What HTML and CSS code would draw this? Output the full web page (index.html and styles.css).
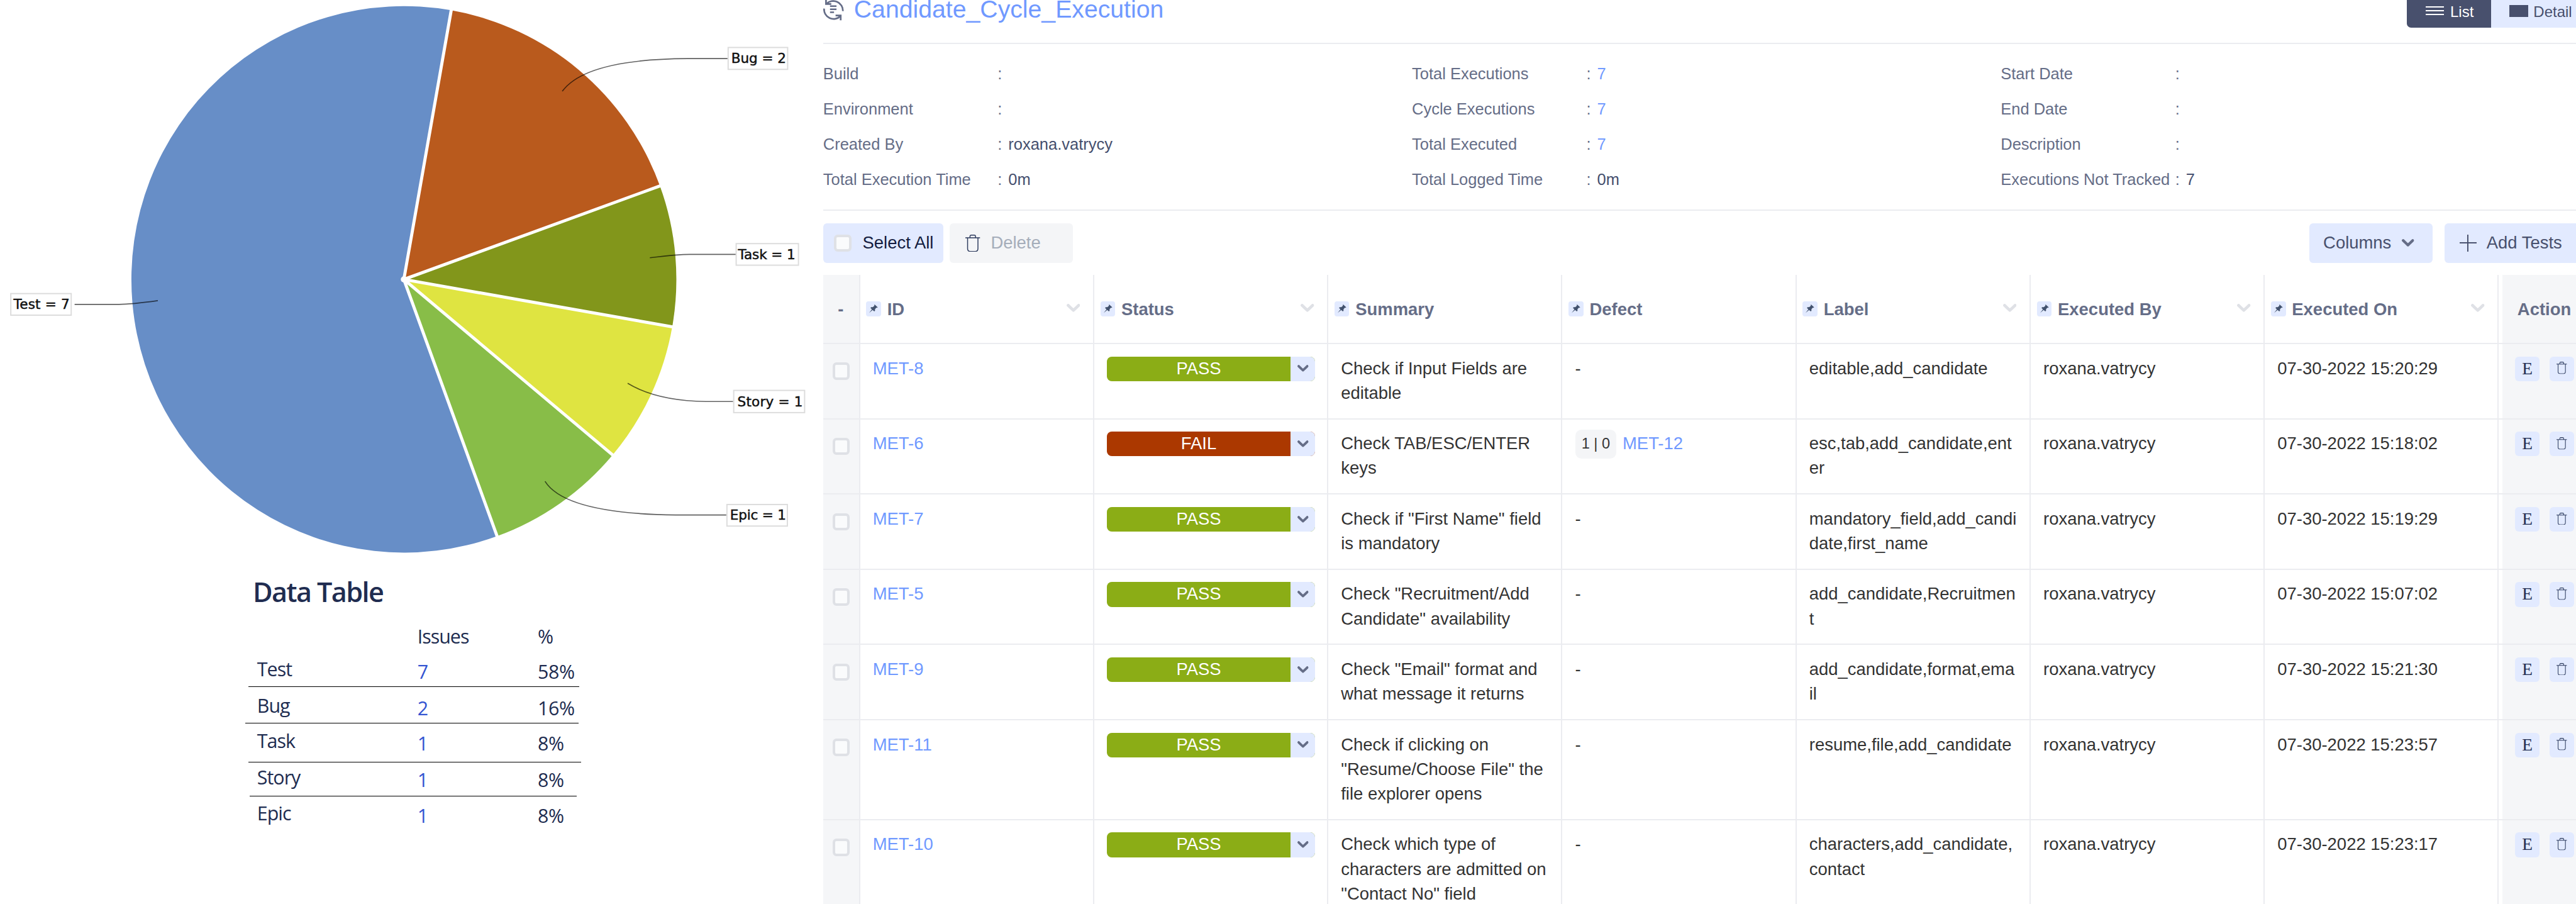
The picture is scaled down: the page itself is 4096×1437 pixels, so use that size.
FILE: index.html
```html
<!DOCTYPE html>
<html lang="en">
<head>
<meta charset="utf-8">
<title>Candidate_Cycle_Execution</title>
<link rel="stylesheet" href="styles.css">
</head>
<body>
<svg class="sprite" width="0" height="0" aria-hidden="true">
  <symbol id="pin" viewBox="0 0 24 24"><path d="M14 5L19 9.6L17.9 10.4L16.9 10.2L14.6 12.7L14.6 15.2L13.4 16.4L10.7 14L5 19L9.6 12.9L7.2 10.7L8.4 9.5L11 9.5L13.7 7.2L13.3 6.1Z" fill="#42526e"/></symbol>
  <symbol id="chev" viewBox="0 0 22 14"><path d="M2.5 2.5Q8 8 11 10.5Q14 8 19.5 2.5" fill="none" stroke="currentColor" stroke-width="4.8" stroke-linecap="round" stroke-linejoin="round"/></symbol>
  <symbol id="trash" viewBox="0 0 24 28"><path d="M0 5.2H24M7.5 5V3Q7.500 .8 9.700 .8H14.300Q16.500 .8 16.500 3V5M3.600 5.500V22.500Q3.600 27.200 8 27.200H16Q20.400 27.200 20.400 22.500V5.500" fill="none" stroke="#2c3a5c" stroke-width="1.500"/></symbol>
</svg>
<main class="page">
  <section class="report">
    <svg class="pie" viewBox="0 0 1335 925">
      <path fill="#678ec7" d="M655 453L731.800 16.700A442 443 0 1 0 806.200 869.300Z"/>
      <path fill="#b95a1d" d="M655 453L731.800 16.700A442 443 0 0 1 1070.300 301.500Z"/>
      <path fill="#82961b" d="M655 453L1070.300 301.500A442 443 0 0 1 1090.300 529.900Z"/>
      <path fill="#dfe441" d="M655 453L1090.300 529.900A442 443 0 0 1 993.600 737.800Z"/>
      <path fill="#88bd48" d="M655 453L993.600 737.800A442 443 0 0 1 806.200 869.300Z"/>
      <path stroke="#fff" stroke-width="5" d="M655 453L732.700 11.700M655 453L1075 299.800M655 453L1095.300 530.800M655 453L997.500 741M655 453L807.900 874"/>
      <circle cx="655" cy="453" r="5" fill="#fff"/>
      <g fill="none" stroke="#000" stroke-opacity=".62" stroke-width="1.700">
        <path d="M912 148Q950 96 1115 95H1180"/>
        <path d="M1054 418Q1100 412.500 1119 412.500H1194"/>
        <path d="M1018 621.500Q1065 650 1145 651H1189"/>
        <path d="M884 780.500Q917 833 1096 835H1178"/>
        <path d="M256 487.500Q213 493.500 193 493.500H121"/>
      </g>
      <g fill="#fff" stroke="#dcdcdc" stroke-width="2">
        <rect x="1181" y="77" width="96.500" height="35.500"/>
        <rect x="1194" y="395" width="101" height="35"/>
        <rect x="1190" y="633" width="115" height="36"/>
        <rect x="1179" y="818" width="98" height="35"/>
        <rect x="17.500" y="476" width="98" height="35"/>
      </g>
      <g class="pie-text">
        <text x="1186" y="102.500" textLength="89">Bug = 2</text>
        <text x="1197" y="420" textLength="93">Task = 1</text>
        <text x="1196" y="659" textLength="106">Story = 1</text>
        <text x="1184" y="843" textLength="91">Epic = 1</text>
        <text x="22" y="501" textLength="91">Test = 7</text>
      </g>
    </svg>
    <h2 class="data-title">Data Table</h2>
    <div class="data-row data-head"><span></span><span>Issues</span><span>%</span></div>
    <div class="data-row row-test"><span>Test</span><a>7</a><b>58%</b></div>
    <div class="rule rule-test"></div>
    <div class="data-row row-bug"><span>Bug</span><a>2</a><b>16%</b></div>
    <div class="rule rule-bug"></div>
    <div class="data-row row-task"><span>Task</span><a>1</a><b>8%</b></div>
    <div class="rule rule-task"></div>
    <div class="data-row row-story"><span>Story</span><a>1</a><b>8%</b></div>
    <div class="rule rule-story"></div>
    <div class="data-row row-epic"><span>Epic</span><a>1</a><b>8%</b></div>
  </section>

  <section class="cycle">
    <header class="title-bar">
      <svg class="cycle-icon" viewBox="0 0 34 36"><g fill="none" stroke="#656d87" stroke-width="2.800"><path d="M5.500 8A15.500 15.500 0 0 1 31.800 20"/><path d="M4.500 .5V8.500H13"/><path d="M1.400 16A15.500 15.500 0 0 0 28 28"/><path d="M20 27.200H28.300V35"/></g><path d="M11 12H21.500M11 17H21.500M11 22H17.500" stroke="#656d87" stroke-width="2.600"/></svg>
      <h1>Candidate_Cycle_Execution</h1>
      <div class="toggle">
        <span class="toggle-item toggle-on"><i class="lines"><i></i><i></i><i></i></i>List</span>
        <span class="toggle-item"><i class="block"></i>Detail</span>
      </div>
    </header>

    <dl class="info">
      <div><dt>Build</dt><dd>:</dd></div>
      <div><dt>Total Executions</dt><dd>: <a>7</a></dd></div>
      <div><dt>Start Date</dt><dd>:</dd></div>
      <div><dt>Environment</dt><dd>:</dd></div>
      <div><dt>Cycle Executions</dt><dd>: <a>7</a></dd></div>
      <div><dt>End Date</dt><dd>:</dd></div>
      <div><dt>Created By</dt><dd>: <b>roxana.vatrycy</b></dd></div>
      <div><dt>Total Executed</dt><dd>: <a>7</a></dd></div>
      <div><dt>Description</dt><dd>:</dd></div>
      <div><dt>Total Execution Time</dt><dd>: <b>0m</b></dd></div>
      <div><dt>Total Logged Time</dt><dd>: <b>0m</b></dd></div>
      <div><dt>Executions Not Tracked</dt><dd>: <b>7</b></dd></div>
    </dl>

    <div class="tools">
      <span class="btn btn-select"><i class="check"></i>Select All</span>
      <span class="btn btn-delete"><svg width="24" height="28"><use href="#trash"/></svg>Delete</span>
      <span class="btn btn-columns">Columns<svg width="20" height="13"><use href="#chev"/></svg></span>
      <span class="btn btn-add"><i class="plus"></i>Add Tests</span>
    </div>

    <div class="grid">
      <div class="tr th">
        <div class="pick">-</div>
        <div class="td"><svg class="pin"><use href="#pin"/></svg>ID<svg class="sort"><use href="#chev"/></svg></div>
        <div class="td"><svg class="pin"><use href="#pin"/></svg>Status<svg class="sort"><use href="#chev"/></svg></div>
        <div class="td"><svg class="pin"><use href="#pin"/></svg>Summary</div>
        <div class="td"><svg class="pin"><use href="#pin"/></svg>Defect</div>
        <div class="td"><svg class="pin"><use href="#pin"/></svg>Label<svg class="sort"><use href="#chev"/></svg></div>
        <div class="td"><svg class="pin"><use href="#pin"/></svg>Executed By<svg class="sort"><use href="#chev"/></svg></div>
        <div class="td"><svg class="pin"><use href="#pin"/></svg>Executed On<svg class="sort"><use href="#chev"/></svg></div>
        <div class="act">Action</div>
      </div>
      <div class="tr">
        <div class="pick"><i class="check"></i></div>
        <div class="td"><a>MET-8</a></div>
        <div class="td"><span class="status"><b>PASS</b><i><svg><use href="#chev"/></svg></i></span></div>
        <div class="td">Check if Input Fields are<br>editable</div>
        <div class="td">-</div>
        <div class="td">editable,add_candidate</div>
        <div class="td">roxana.vatrycy</div>
        <div class="td">07-30-2022 15:20:29</div>
        <div class="act"><span class="mini">E</span><span class="mini"><svg><use href="#trash"/></svg></span></div>
      </div>
      <div class="tr">
        <div class="pick"><i class="check"></i></div>
        <div class="td"><a>MET-6</a></div>
        <div class="td"><span class="status fail"><b>FAIL</b><i><svg><use href="#chev"/></svg></i></span></div>
        <div class="td">Check TAB/ESC/ENTER<br>keys</div>
        <div class="td defect"><span class="badge">1 | 0</span><a>MET-12</a></div>
        <div class="td">esc,tab,add_candidate,ent<br>er</div>
        <div class="td">roxana.vatrycy</div>
        <div class="td">07-30-2022 15:18:02</div>
        <div class="act"><span class="mini">E</span><span class="mini"><svg><use href="#trash"/></svg></span></div>
      </div>
      <div class="tr">
        <div class="pick"><i class="check"></i></div>
        <div class="td"><a>MET-7</a></div>
        <div class="td"><span class="status"><b>PASS</b><i><svg><use href="#chev"/></svg></i></span></div>
        <div class="td">Check if "First Name" field<br>is mandatory</div>
        <div class="td">-</div>
        <div class="td">mandatory_field,add_candi<br>date,first_name</div>
        <div class="td">roxana.vatrycy</div>
        <div class="td">07-30-2022 15:19:29</div>
        <div class="act"><span class="mini">E</span><span class="mini"><svg><use href="#trash"/></svg></span></div>
      </div>
      <div class="tr">
        <div class="pick"><i class="check"></i></div>
        <div class="td"><a>MET-5</a></div>
        <div class="td"><span class="status"><b>PASS</b><i><svg><use href="#chev"/></svg></i></span></div>
        <div class="td">Check "Recruitment/Add<br>Candidate" availability</div>
        <div class="td">-</div>
        <div class="td">add_candidate,Recruitmen<br>t</div>
        <div class="td">roxana.vatrycy</div>
        <div class="td">07-30-2022 15:07:02</div>
        <div class="act"><span class="mini">E</span><span class="mini"><svg><use href="#trash"/></svg></span></div>
      </div>
      <div class="tr">
        <div class="pick"><i class="check"></i></div>
        <div class="td"><a>MET-9</a></div>
        <div class="td"><span class="status"><b>PASS</b><i><svg><use href="#chev"/></svg></i></span></div>
        <div class="td">Check "Email" format and<br>what message it returns</div>
        <div class="td">-</div>
        <div class="td">add_candidate,format,ema<br>il</div>
        <div class="td">roxana.vatrycy</div>
        <div class="td">07-30-2022 15:21:30</div>
        <div class="act"><span class="mini">E</span><span class="mini"><svg><use href="#trash"/></svg></span></div>
      </div>
      <div class="tr tall">
        <div class="pick"><i class="check"></i></div>
        <div class="td"><a>MET-11</a></div>
        <div class="td"><span class="status"><b>PASS</b><i><svg><use href="#chev"/></svg></i></span></div>
        <div class="td">Check if clicking on<br>"Resume/Choose File" the<br>file explorer opens</div>
        <div class="td">-</div>
        <div class="td">resume,file,add_candidate</div>
        <div class="td">roxana.vatrycy</div>
        <div class="td">07-30-2022 15:23:57</div>
        <div class="act"><span class="mini">E</span><span class="mini"><svg><use href="#trash"/></svg></span></div>
      </div>
      <div class="tr tall">
        <div class="pick"><i class="check"></i></div>
        <div class="td"><a>MET-10</a></div>
        <div class="td"><span class="status"><b>PASS</b><i><svg><use href="#chev"/></svg></i></span></div>
        <div class="td">Check which type of<br>characters are admitted on<br>"Contact No" field</div>
        <div class="td">-</div>
        <div class="td">characters,add_candidate,<br>contact</div>
        <div class="td">roxana.vatrycy</div>
        <div class="td">07-30-2022 15:23:17</div>
        <div class="act"><span class="mini">E</span><span class="mini"><svg><use href="#trash"/></svg></span></div>
      </div>
    </div>
  </section>
</main>
</body>
</html>
```
FILE: styles.css
```css
* { box-sizing: border-box; }
html, body { margin: 0; height: 1437px; overflow: hidden; background: #fff; }
h1, h2, dl, dd { margin: 0; }
i { font-style: normal; }
.sprite { position: absolute; }

.page {
  --line: 2.05px;
  zoom: 0.980374;
  width: 4178px;
  height: 1466px;
  display: flex;
  overflow: hidden;
  font-family: "Liberation Sans", Arial, sans-serif;
  font-size: 28px;
  color: #333;
}

/* pie report */
.report {
  width: 1335px;
  flex: none;
  font-family: "Open Sans", "Noto Sans", sans-serif;
  color: #202c50;
}
.pie { display: block; width: 1335px; height: 925px; }
.pie-text { font-family: "DejaVu Sans", sans-serif; font-size: 22px; fill: #111; stroke: #111; stroke-width: 0.5px; }
.data-title {
  margin-left: 410px;
  height: 85px;
  line-height: 60px;
  padding-top: 5px;
  font-size: 44px;
  font-weight: 600;
  letter-spacing: -1.6px;
}
.data-row {
  display: grid;
  grid-template-columns: 260px 195px 100px;
  margin-left: 417px;
  font-size: 31px;
  line-height: 44px;
  letter-spacing: -1px;
}
.data-row a { color: #3454d1; padding-top: 4px; }
.data-row b { font-weight: 400; padding-top: 4px; letter-spacing: -0.3px; }
.data-head { height: 52px; }
.row-test { height: 51px; padding-top: 1px; }
.row-bug { height: 58px; padding-top: 8px; }
.row-task { height: 62px; padding-top: 6px; }
.row-story { height: 54px; padding-top: 2px; }
.row-epic { height: 60px; padding-top: 5px; }
.rule { border-top: 1.05px solid #000; }
.rule-test { margin-left: 403px; width: 536px; }
.rule-bug { margin-left: 398px; width: 540px; }
.rule-task { margin-left: 403px; width: 540px; }
.rule-story { margin-left: 405px; width: 530px; }

/* cycle panel */
.cycle { flex: 1; min-width: 0; }
.cycle a { color: #7099ff; }
.title-bar {
  display: flex;
  height: 71px;
  border-bottom: var(--line) solid #ebecf0;
}
.cycle-icon { width: 34px; height: 36px; margin-top: -2px; }
.title-bar h1 {
  flex: 1;
  margin: -8px 0 0 16px;
  line-height: 46px;
  font-size: 40px;
  font-weight: 400;
  color: #7099ff;
}
.toggle { display: flex; height: 45px; width: 274px; font-size: 24.5px; line-height: 38px; }
.toggle-item {
  display: flex;
  flex: none;
  width: 136px;
  padding-left: 30px;
  background: #e2eaff;
  color: #48506d;
}
.toggle-item + .toggle-item { width: 138px; }
.toggle-on { background: #48506d; color: #fff; border-bottom-left-radius: 7px; }
.lines { width: 30px; margin: 10px 10px 0 0; display: grid; gap: 4px; align-content: start; }
.lines i { height: 2.05px; background: #fff; }
.block { width: 30px; height: 20px; margin: 8px 9px 0 0; background: #48506d; }

.info {
  display: grid;
  grid-template-columns: 955px 955px 900px;
  grid-auto-rows: 57px;
  height: 271px;
  padding-top: 21px;
  border-bottom: var(--line) solid #ebecf0;
  font-size: 26px;
  line-height: 57px;
  color: #656d87;
}
.info div { display: flex; }
.info dt { width: 283px; white-space: nowrap; }
.info dd { white-space: pre; }
.info dd b { font-weight: 400; color: #454f6e; }
.info dd a, .info dd b { margin-left: 3px; }

.tools { display: flex; height: 104px; padding-top: 20px; }
.btn {
  display: flex;
  align-items: center;
  height: 64px;
  border-radius: 6px;
  background: #e2eaff;
  color: #48506d;
  white-space: nowrap;
}
.check {
  display: block;
  width: 28px;
  height: 28px;
  border: 4.1px solid #dfe1e6;
  border-radius: 6px;
  background: #fafbfc;
}
.btn-select { width: 195px; padding-left: 18px; color: #141d40; }
.btn-select .check { margin-right: 18px; }
.btn-delete { width: 200px; margin-left: 10px; padding-left: 26px; background: #f4f5f7; color: #a5adba; }
.btn-delete svg { margin-right: 17px; }
.btn-columns { width: 200px; margin-left: auto; padding-left: 23px; }
.btn-columns svg { margin-left: 17px; color: #656d87; }
.btn-add { width: 213px; margin-left: 20px; padding-left: 24px; border-radius: 6px 0 0 6px; }
.plus {
  width: 28px;
  height: 28px;
  margin-right: 16px;
  background:
    linear-gradient(#48506d, #48506d) center / 28px 2px no-repeat,
    linear-gradient(#48506d, #48506d) center / 2px 28px no-repeat;
}

/* execution grid */
.tr {
  display: grid;
  grid-template-columns: 60px repeat(7, minmax(0, 1fr)) 125px;
  height: 122px;
  border-bottom: var(--line) solid #ebecf0;
  line-height: 40px;
  white-space: nowrap;
}
.tall { height: 162px; }
.td { padding: 19px 0 0 20.5px; border-right: var(--line) solid #ebecf0; }
.pick { background: #f5f6f8; border-right: var(--line) solid #ebecf0; padding: 30px 0 0 15px; }
.act { display: flex; gap: 16px; margin-left: 6px; padding: 20px 0 0 20px; background: #f5f6f8; }

.th { height: 112px; font-weight: 700; color: #656d87; }
.th .td { display: flex; align-items: center; padding: 0 21px 0 10px; }
.th .pick { padding: 35px 0 0 24px; }
.th .act { padding: 35px 0 0 24px; }
.pin { width: 24px; height: 24px; margin-right: 10px; border-radius: 4px; background: #e2eaff; }
.sort { width: 22px; height: 14px; margin-left: auto; margin-top: -2px; color: #dfe1e6; }

.status { display: flex; width: 338px; height: 40px; margin-top: 1px; border-radius: 8px; overflow: hidden; background: #8bad16; }
.status.fail { background: #ab3800; }
.status b { flex: 1; font-weight: 400; text-align: center; color: #fff; line-height: 39px; }
.status i { width: 40px; padding: 14px 0 0 11px; background: #e2eaff; line-height: 0; }
.status svg { width: 18px; height: 11.5px; color: #656d87; }

.defect { display: flex; align-items: flex-start; }
.badge { width: 67px; height: 47px; margin: -2px 10px 0 0; border-radius: 10px; background: #f4f5f7; font-size: 24px; line-height: 46px; text-align: center; }

.mini {
  display: flex;
  flex: none;
  justify-content: center;
  align-items: center;
  width: 40px;
  height: 40px;
  border-radius: 6px;
  background: #e2eaff;
  font: 28px/38px "Liberation Serif", serif;
  color: #202c50;
}
.mini svg { width: 17px; height: 20px; margin-bottom: 2px; }
```
